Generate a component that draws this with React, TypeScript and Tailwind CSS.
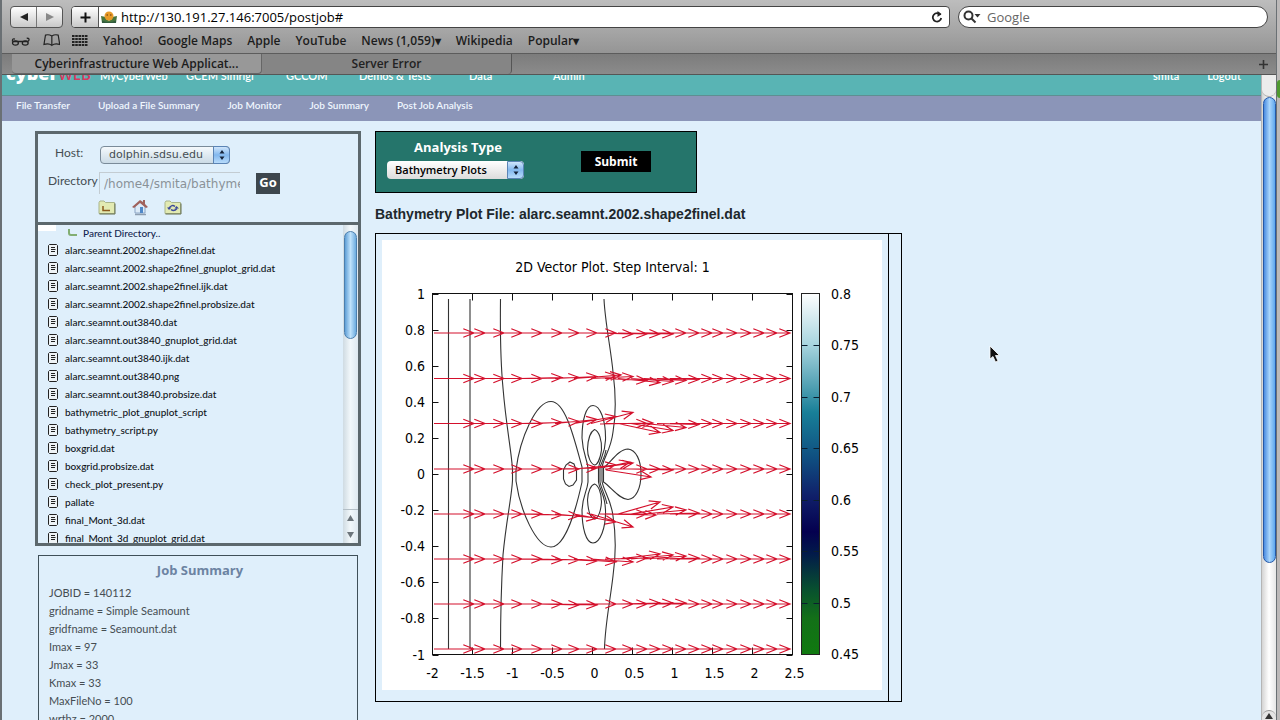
import React from "react";

const bookmarks = ["Yahoo!", "Google Maps", "Apple", "YouTube", "News (1,059)▾", "Wikipedia", "Popular▾"];

const files = [
  "alarc.seamnt.2002.shape2finel.dat",
  "alarc.seamnt.2002.shape2finel_gnuplot_grid.dat",
  "alarc.seamnt.2002.shape2finel.ijk.dat",
  "alarc.seamnt.2002.shape2finel.probsize.dat",
  "alarc.seamnt.out3840.dat",
  "alarc.seamnt.out3840_gnuplot_grid.dat",
  "alarc.seamnt.out3840.ijk.dat",
  "alarc.seamnt.out3840.png",
  "alarc.seamnt.out3840.probsize.dat",
  "bathymetric_plot_gnuplot_script",
  "bathymetry_script.py",
  "boxgrid.dat",
  "boxgrid.probsize.dat",
  "check_plot_present.py",
  "pallate",
  "final_Mont_3d.dat",
  "final_Mont_3d_gnuplot_grid.dat",
];

const summary = [
  "JOBID = 140112",
  "gridname = Simple Seamount",
  "gridfname = Seamount.dat",
  "Imax = 97",
  "Jmax = 33",
  "Kmax = 33",
  "MaxFileNo = 100",
  "wrthz = 2000",
];

const subNav = ["File Transfer", "Upload a File Summary", "Job Monitor", "Job Summary", "Post Job Analysis"];

type Arrow = [number, number, number, number];

const rowTips = [474, 485, 504, 522, 542, 562, 579, 597, 616, 633, 647, 660, 673, 686, 699, 712, 723, 737, 751, 764, 777, 790];

/* Vertical offset of an arrow tip from its row, where the flow is deflected. */
const rows: { y: number; dy: Record<number, number> }[] = [
  { y: 333, dy: { 633: 1, 647: 1, 660: 1, 673: 1 } },
  { y: 378.5, dy: { 562: -1, 579: -1, 597: -2, 616: -3, 633: -2, 647: 2, 660: 4, 673: 3, 686: 2, 699: 1 } },
  { y: 423.5, dy: { 562: -1, 579: -2, 597: -4, 616: -7, 633: -11, 660: 9, 673: 7, 686: 4, 699: 1 } },
  { y: 469, dy: { 597: -1, 616: -4, 633: -6, 660: 0, 673: 1 } },
  { y: 514, dy: { 562: 1, 579: 2, 597: 4, 616: 8, 633: 13, 660: -12, 673: -7, 686: -4, 699: -1 } },
  { y: 559, dy: { 562: 1, 579: 1, 597: 2, 616: 3, 633: 3, 647: -1, 660: -5, 673: -4, 686: -3, 699: -1 } },
  { y: 604, dy: { 579: 1, 597: 1, 660: -1, 673: -1, 686: -1 } },
  { y: 649, dy: {} },
];

const extraArrows: Arrow[] = [
  [595, 377, 621, 375],
  [600, 424, 653, 423],
  [606, 467, 630, 462],
  [606, 470, 651, 477],
  [600, 514, 656, 515],
];

function arrowPath([x1, y1, x2, y2]: Arrow) {
  const a = Math.atan2(y2 - y1, x2 - x1);
  const barb = (s: number) =>
    `${(x2 - 11.5 * Math.cos(a + s)).toFixed(1)} ${(y2 - 11.5 * Math.sin(a + s)).toFixed(1)}`;
  return `M${x1} ${y1}L${x2} ${y2}M${barb(0.38)}L${x2} ${y2}L${barb(-0.38)}`;
}

const vectorPath = [
  ...rows.flatMap(({ y, dy }) =>
    rowTips.map((x, i): Arrow => [i === 0 ? 434 : Math.max(434, x - 42), y, x, y + (dy[x] ?? 0)])
  ),
  ...extraArrows,
]
  .map(arrowPath)
  .join("");

const yTicks = ["1", "0.8", "0.6", "0.4", "0.2", "0", "-0.2", "-0.4", "-0.6", "-0.8", "-1"];
const xTicks = ["-2", "-1.5", "-1", "-0.5", "0", "0.5", "1", "1.5", "2", "2.5"];
const barTicks = ["0.8", "0.75", "0.7", "0.65", "0.6", "0.55", "0.5", "0.45"];

function VectorPlot() {
  return (
    <svg
      role="img"
      aria-label="2D vector plot"
      viewBox="382 240 500 450"
      className="block h-[450px] w-[500px] bg-white font-['DejaVu_Sans_Condensed','DejaVu_Sans',sans-serif] text-[14px]"
    >
      <defs>
        <linearGradient id="bar" x1="0" y1="0" x2="0" y2="1">
          <stop offset="0" stopColor="#fdfefe" />
          <stop offset="0.14" stopColor="#a9d5df" />
          <stop offset="0.26" stopColor="#4f9fb2" />
          <stop offset="0.33" stopColor="#187f98" />
          <stop offset="0.46" stopColor="#0f4d80" />
          <stop offset="0.56" stopColor="#10206a" />
          <stop offset="0.66" stopColor="#04004f" />
          <stop offset="0.72" stopColor="#021a4a" />
          <stop offset="0.82" stopColor="#08502f" />
          <stop offset="0.9" stopColor="#137018" />
          <stop offset="1" stopColor="#107a10" />
        </linearGradient>
      </defs>
      <text x="612.5" y="272" textAnchor="middle">2D Vector Plot. Step Interval: 1</text>
      <rect x="432.5" y="293.5" width="360" height="361" fill="none" stroke="#111" />
      {yTicks.map((t, i) => {
        const y = Math.round(293.5 + i * 36.1) + 0.5;
        return (
          <g key={t}>
            <path d={`M432.5 ${y}h6M792.5 ${y}h-6`} stroke="#111" />
            <text x="425" y={y + 4.5} textAnchor="end">{t}</text>
          </g>
        );
      })}
      {xTicks.map((t, i) => {
        const x = 432.5 + i * 40;
        return (
          <g key={t}>
            <path d={`M${x} 293.5v7M${x} 654.5v-7`} stroke="#111" />
            <text x={x + (t.startsWith("-") ? 0 : 2)} y="678" textAnchor="middle">{t}</text>
          </g>
        );
      })}
      <rect x="801.5" y="293.5" width="18" height="361" fill="url(#bar)" stroke="#222" />
      {barTicks.map((t, i) => {
        const y = Math.round(293.5 + i * 51.57) + 0.5;
        return (
          <g key={t}>
            {i > 0 && i < 7 && <path d={`M801.5 ${y}h6M819.5 ${y}h-6`} stroke="#0b1f30" />}
            <text x="831" y={y + 4.5}>{t}</text>
          </g>
        );
      })}
      <g fill="none" stroke="#333" strokeWidth="1.1">
        <path d="M448.5 299V649M470 299V649" />
        <path d="M500.5 299C500 340 501.500 372 503 388C506 425 512 455 512.500 470V480C512 495 506 522 503 555C501 590 500.500 620 500.500 649" />
        <path d="M604 299C605 322 611 350 613 372C616 395 616 415 613 432C611 450 603 458 602 468V481C603 490 611 499 613 516C616 535 616 555 613 576C610 602 605 625 604.500 649" />
        <path d="M551 401.500C566 401.500 575 442 582 467V482C577 505 566 547 551 547C536 547 520 510 516 481V470C520 438 536 401.500 551 401.500Z" />
        <path d="M570 462L574 464L576.500 471V480L573 485L569 486.500L565.500 484L563.500 479V470L566 465Z" />
        <path d="M593 405.500C600 405.500 606 420 605.500 440C605 455 600 458 598.500 468V482C600 492 605 494 605.500 510C606 528 600 543 593 543C586 543 582 528 582 510C583 494 587 492 588 482V468C587 458 583 455 582 438C582 420 586 405.500 593 405.500Z" />
        <path d="M594.500 429.500C599 431 602 440 601.500 450C600 460 597 465 594.500 465C591 464 587.500 457 587.500 449C588 438 590 432 594.500 429.500Z" />
        <path d="M594.500 484C598 485 601.500 492 601.500 502C601 511 598 519 594.500 519C590 518 588 510 587.500 500C588 491 591 485 594.500 484Z" />
        <path d="M628 449C636 450 641 460 641 474C641 488 636 499 628 499.500C619 499 611 487 603.500 482V468C611 462 619 449 628 449Z" />
        <path d="M606 450C605 458 601 462 600 468V482C601 488 605 494 607 504" />
      </g>
      <path d={vectorPath} fill="none" stroke="#d4102c" strokeWidth="1.2" />
    </svg>
  );
}

function PopUpArrows() {
  return (
    <span className="pointer-events-none absolute inset-y-0 right-0 flex w-[17px] items-center justify-center rounded-r border border-[#5b84b5] bg-linear-to-b from-[#cfe5fb] via-[#83b8ee] to-[#b8dcfb]">
      <svg viewBox="0 0 6 10" className="h-2.5 w-1.5" fill="#15233a">
        <path d="M3 0L5.500 3.500H.5zM3 10L5.500 6.500H.5z" />
      </svg>
    </span>
  );
}

function FileIcon() {
  return (
    <svg viewBox="0 0 10 12" className="h-3 w-2.5 shrink-0" fill="none" stroke="#222">
      <path d="M1.500 .5H8.500L9.500 1.500V10.500L8.500 11.500H1.500L.5 10.500V1.500Z" fill="#eef3f6" />
      <path d="M3 3.500H7M3 5.500H7.500M3 7.500H7" />
    </svg>
  );
}

function Folder({ children }: { children: React.ReactNode }) {
  return (
    <svg viewBox="0 0 18 15" className="h-[15px] w-[18px]">
      <path d="M1 2.500L2 1H6L7.500 2.500H16.500V13.500H1Z" fill="#e2eab2" stroke="#a9b48a" />
      <path d="M1.500 14H17V3.500" fill="none" stroke="#66704f" />
      {children}
    </svg>
  );
}

function BrowserChrome() {
  return (
    <header className="shrink-0 font-['Open_Sans',sans-serif] text-[#1c1c1c]">
      <div className="flex h-[54px] flex-col border-b border-[#5c5c5c] bg-linear-to-b from-[#bdbdbd] to-[#959595] pt-1.5">
        <div className="flex h-[22px] items-stretch px-2">
          <div className="flex w-[53px] overflow-hidden rounded border border-[#555] bg-linear-to-b from-white to-[#c9c9c9]">
            <button aria-label="Back" className="flex flex-1 items-center justify-center border-r border-[#777]">
              <svg viewBox="0 0 8 8" className="size-2" fill="#222"><path d="M8 0V8L0 4z" /></svg>
            </button>
            <button aria-label="Forward" className="flex flex-1 items-center justify-center">
              <svg viewBox="0 0 8 8" className="size-2" fill="#888"><path d="M0 0V8L8 4z" /></svg>
            </button>
          </div>
          <div className="ml-2 flex flex-1 overflow-hidden rounded border border-[#444] bg-white">
            <button aria-label="Add bookmark" className="flex w-[27px] items-center justify-center border-r border-[#555] bg-linear-to-b from-white to-[#c9c9c9]">
              <svg viewBox="0 0 11 11" className="size-[11px]" stroke="#111" strokeWidth="2"><path d="M5.500 .5V10.500M.5 5.500H10.500" /></svg>
            </button>
            <label className="flex flex-1 items-center gap-1 pl-0.5">
              <svg viewBox="0 0 16 12" className="h-3 w-4">
                <path d="M0 5L5 6L8 10L11 6L16 5L15 12H1Z" fill="#47753f" />
                <ellipse cx="8" cy="5" rx="4.500" ry="4.500" fill="#e89b28" />
                <path d="M5.500 4H7M9 4H10.500" stroke="#603010" />
                <path d="M1 9.500Q8 13 15 9.500V12H1Z" fill="#315c3d" />
              </svg>
              <input aria-label="Address" defaultValue="http://130.191.27.146:7005/postjob#" className="min-w-0 flex-1 pt-px text-[13px] text-black outline-none" />
            </label>
            <button aria-label="Reload" className="flex w-6 items-center justify-center">
              <svg viewBox="0 0 12 12" className="size-3" fill="none" stroke="#222" strokeWidth="1.8">
                <path d="M9.500 4A4.200 4.200 0 1 0 10.200 7" /><path d="M6.500 0L10.500 3L6.500 6Z" fill="#222" stroke="none" />
              </svg>
            </button>
          </div>
          <label className="ml-2 flex w-[310px] items-center gap-1.5 rounded-full border border-[#444] bg-white pl-1">
            <svg viewBox="0 0 18 14" className="h-3.5 w-[18px]" fill="none" stroke="#333" strokeWidth="2">
              <circle cx="5.500" cy="5.500" r="4" /><path d="M8.500 8.500L12.500 12.500" /><path d="M11.500 4H17.500L14.500 7.500Z" fill="#333" stroke="none" />
            </svg>
            <input aria-label="Search" placeholder="Google" className="min-w-0 flex-1 pt-px text-[13px] outline-none placeholder:text-[#666]" />
          </label>
        </div>
        <nav className="flex flex-1 items-center gap-[15px] pl-[9px] text-[12px] font-semibold">
          <div className="flex w-[77px] items-center gap-3">
            <svg viewBox="0 0 20 10" className="h-2.5 w-5" fill="none" stroke="#222" strokeWidth="1.300">
              <ellipse cx="4.500" cy="7" rx="3" ry="2.200" /><ellipse cx="14.500" cy="7" rx="3" ry="2.200" /><path d="M1.500 5.500H17.500M1.500 5.500Q1 2 4 3M17.500 5.500Q20 2 16 2" />
            </svg>
            <svg viewBox="0 0 18 13" className="h-[13px] w-[18px]" fill="none" stroke="#222" strokeWidth="1.200">
              <path d="M9 2Q6 0 2.500 1L1 10.500Q6 9 9 11.500Q12 9 17 10.500L15.500 1Q12 0 9 2V11.500" />
            </svg>
            <svg viewBox="0 0 16 11" className="h-[11px] w-4" stroke="#222" strokeWidth="2" strokeDasharray="2.600 .7">
              <path d="M0 1H16M0 4H16M0 7H16M0 10H16" />
            </svg>
          </div>
          {bookmarks.map((b) => (
            <a key={b} href="#">{b}</a>
          ))}
        </nav>
      </div>
      <div className="flex h-[21px] items-stretch border-b border-[#555] bg-linear-to-b from-[#7c7c7c] to-[#8b8b8b] pl-2.5 text-[12px] font-semibold">
        <button className="w-[250px] rounded-b border-r border-b border-[#666] bg-[#989898]">Cyberinfrastructure Web Applicat...</button>
        <button className="w-[250px] rounded-b border-r border-[#555] bg-[#858585] text-[#222]">Server Error</button>
        <button aria-label="New tab" className="mr-2 ml-auto">
          <svg viewBox="0 0 9 9" className="size-[9px]" stroke="#333" strokeWidth="1.600"><path d="M4.500 0V9M0 4.500H9" /></svg>
        </button>
      </div>
    </header>
  );
}

function FileBrowser() {
  return (
    <section className="border-3 border-[#5c686d]">
      <div className="h-[91px] border-b-3 border-[#5c686d] px-2.5 pt-[7px] text-[12px] text-[#454d52]">
        <div className="flex h-7 items-center">
          <label htmlFor="host" className="w-[52px] pb-1 pl-[7px]">Host:</label>
          <div className="relative h-[18px] w-[130px]">
            <select id="host" className="block h-full w-full appearance-none rounded border border-[#7a8b99] bg-linear-to-b from-[#f4f9fc] to-[#cbdbe6] pl-2 font-['DejaVu_Sans',sans-serif] text-[11px] leading-4">
              <option>dolphin.sdsu.edu</option>
            </select>
            <PopUpArrows />
          </div>
        </div>
        <div className="flex h-7 items-center">
          <label htmlFor="dir" className="w-[51px] pb-1">Directory</label>
          <input id="dir" defaultValue="/home4/smita/bathymetry" className="h-[22px] w-[141px] border-t border-l border-[#c3ccd2] pl-1 font-['DejaVu_Sans',sans-serif] text-[12px] text-[#8a9298] outline-none" />
          <button className="ml-4 h-[21px] w-6 bg-[#3d464d] font-['Open_Sans',sans-serif] text-[13px] font-bold text-white">Go</button>
        </div>
        <div className="flex h-5 items-center gap-4 pl-[50px]">
          <button aria-label="Up"><Folder><path d="M5 6V10.500H12" fill="none" stroke="#8c5a1c" strokeWidth="1.500" /></Folder></button>
          <button aria-label="Home">
            <svg viewBox="0 0 16 17" className="h-[17px] w-4">
              <path d="M3 7V14H13V7L8 3Z" fill="#dcebf8" stroke="#8aa4c4" />
              <path d="M0 8L8 1L11 3V1H13V5L16 8L14 9L8 4L2 9Z" fill="#a0625c" />
              <path d="M8 8H11V14H8Z" fill="#4f88c8" /><path d="M3 15.500H14" stroke="#8d9eb0" strokeWidth="1.500" />
            </svg>
          </button>
          <button aria-label="Refresh"><Folder><path d="M5 8Q8 4 11 6.500M13 8.500Q10 12 7 9.500" fill="none" stroke="#3c4a9a" strokeWidth="1.500" /><path d="M3 7.500H7.500L5 10zM10.500 8.500H15L12.500 6z" fill="#3c4a9a" /></Folder></button>
        </div>
      </div>
      <div className="flex h-[318px]">
        <ul className="min-w-0 flex-1 overflow-hidden text-[10px] leading-[18px] font-medium text-[#10151a]">
          <li className="flex h-4 items-center text-[#14264f]">
            <span className="h-1.5 w-[18px] self-start bg-white" />
            <svg viewBox="0 0 10 8" className="mr-1.5 ml-[11px] h-2 w-2.5" fill="none" stroke="#82ae72" strokeWidth="2"><path d="M2 0V4Q2 6 4 6H10" /></svg>
            <a href="#">Parent Directory..</a>
          </li>
          {files.map((f) => (
            <li key={f} className="flex h-[18px] items-center gap-[7px] pl-2.5">
              <FileIcon />
              <a href="#">{f}</a>
            </li>
          ))}
        </ul>
        <div className="flex w-[15px] flex-col items-center bg-linear-to-r from-[#cfdbe2] via-[#f2f8fb] to-[#dfe9f0]">
          <div className="mt-1.5 h-[108px] w-[13px] rounded-full border border-[#4c7fae] bg-linear-to-r from-[#5f9fd6] via-[#bfe2fb] to-[#6cacdf]" />
          <div className="mt-auto flex h-[34px] w-full flex-col items-center justify-around border-t border-[#b4bfc6] text-[#6d767c]">
            <svg viewBox="0 0 7 6" className="h-1.5 w-[7px]" fill="currentColor"><path d="M3.500 0L7 6H0z" /></svg>
            <svg viewBox="0 0 7 6" className="h-1.5 w-[7px]" fill="currentColor"><path d="M3.500 6L7 0H0z" /></svg>
          </div>
        </div>
      </div>
    </section>
  );
}

export default function App() {
  return (
    <div className="flex h-screen overflow-hidden bg-[#bcb9b9] font-['Lato',sans-serif]">
      <div className="flex min-w-0 flex-1 flex-col border-r border-l-2 border-[#6a7074]">
        <BrowserChrome />
        <div className="flex min-h-0 flex-1">
          <main className="min-w-0 flex-1 overflow-hidden bg-[#dfeffb]">
            <nav className="h-[21px] overflow-hidden border-b border-[#5f8f92] bg-[#59b4b4] text-[11px] leading-4 font-semibold text-white">
              <div className="-mt-2.5 flex items-baseline pr-5 pl-1">
                <a href="#" className="w-[94px] font-['Open_Sans',sans-serif] text-[18px] leading-4 font-extrabold">cyber <span className="-ml-1 text-[15px] font-semibold text-[#d8395f]">WEB</span></a>
                <a href="#" className="w-[86px]">MyCyberWeb</a>
                <a href="#" className="w-[100px]">GCEM Simrigi</a>
                <a href="#" className="w-[73px]">GCCOM</a>
                <a href="#" className="w-[110px]">Demos &amp; Tests</a>
                <a href="#" className="w-[84px]">Data</a>
                <a href="#">Admin</a>
                <a href="#" className="ml-auto">smita</a>
                <a href="#" className="ml-7">Logout</a>
              </div>
            </nav>
            <nav className="flex h-[25px] gap-7 bg-[#8b95b8] pl-3.5 text-[10px] leading-[18px] font-semibold text-[#f0f7ff]">
              {subNav.map((s) => <a key={s} href="#">{s}</a>)}
            </nav>
            <div className="flex items-start gap-3.5 pt-2.5 pl-[33px]">
              <div className="w-[326px] shrink-0">
                <FileBrowser />
                <section className="mx-[3px] mt-[9px] border border-[#3f5059] px-2.5 pb-4 text-[#454d52]">
                  <h2 className="py-1 pl-1 text-center font-['Open_Sans',sans-serif] text-[13px] leading-5 font-bold text-[#6c83a2]">Job Summary</h2>
                  <ul className="text-[11px] leading-[18px]">
                    {summary.map((s) => <li key={s}>{s}</li>)}
                  </ul>
                </section>
              </div>
              <div>
                <form className="flex h-[62px] w-[322px] items-center justify-between border border-black bg-[#25756b] pr-[45px] pl-[11px]">
                  <div className="w-[137px] pb-2">
                    <label htmlFor="analysis" className="block pl-[5px] text-center font-['Open_Sans',sans-serif] text-[13px] leading-5 font-bold text-white">Analysis Type</label>
                    <div className="relative mt-1 h-[18px]">
                      <select id="analysis" className="block h-full w-full appearance-none rounded bg-linear-to-b from-white to-[#dcdcdc] pl-2 font-['Open_Sans',sans-serif] text-[11px] leading-[18px] font-semibold text-black">
                        <option>Bathymetry Plots</option>
                      </select>
                      <PopUpArrows />
                    </div>
                  </div>
                  <button type="button" className="mb-px h-[21px] w-[70px] bg-black font-['Open_Sans',sans-serif] text-[12px] font-bold text-white">Submit</button>
                </form>
                <h1 className="mt-[11px] mb-[9px] font-['Liberation_Sans',sans-serif] text-[14px] leading-5 font-bold text-[#20272c]">Bathymetry Plot File: alarc.seamnt.2002.shape2finel.dat</h1>
                <div className="flex w-fit border border-black">
                  <div className="border-r border-black p-1.5 pb-[11px]"><VectorPlot /></div>
                  <div className="w-3" />
                </div>
              </div>
            </div>
          </main>
          <div className="flex w-[15px] flex-col items-center border-l border-[#b5b5b5] bg-linear-to-r from-[#d4d4d4] via-white to-[#e6e6e6]">
            <div className="h-[22px] w-full rounded-b-full border-b border-[#aaa] bg-[#ececec]" />
            <div className="h-[466px] w-[13px] rounded-full border border-[#2458a8] bg-linear-to-r from-[#4a8be0] via-[#a9d5fb] to-[#5da7ee]" />
            <div className="mt-auto flex h-2.5 w-full items-center justify-center rounded-t-full border-t border-[#999] bg-[#e4e4e4]">
              <svg viewBox="0 0 8 6" className="h-1.5 w-2" fill="#333"><path d="M4 0L8 6H0z" /></svg>
            </div>
          </div>
        </div>
      </div>
      <div className="w-[3px] shrink-0 pt-20">
        <div className="h-[18px] rounded-l-full bg-[#4f9a2f]" />
      </div>
      <svg viewBox="0 0 13 18" className="pointer-events-none absolute top-[345px] left-[989px] h-[18px] w-[13px]">
        <path d="M1 1V14L4 11.500L6.500 17L9 16L6.500 10.500H10.500Z" fill="#111" stroke="#fff" strokeWidth=".8" />
      </svg>
    </div>
  );
}
